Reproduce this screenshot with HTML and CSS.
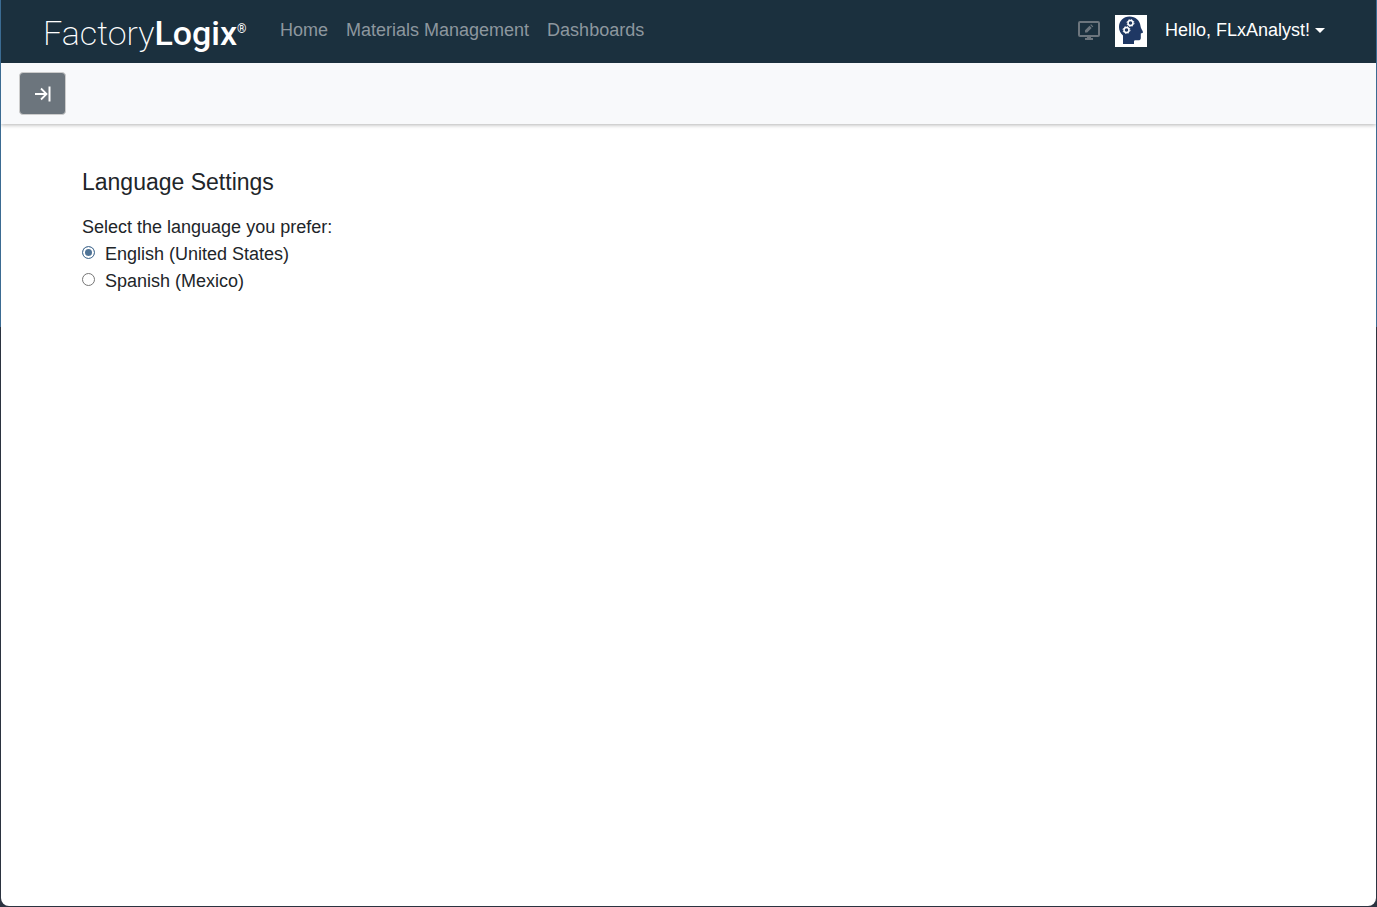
FILE: index.html
```html
<!DOCTYPE html>
<html lang="en">

	<head>
		<meta charset="UTF-8">
		<meta name="viewport" content="width=device-width, initial-scale=1">
		<title>FactoryLogix</title>
		<link rel="stylesheet" href="styles.css">
	</head>

	<body>
		<div class="window">
			<header class="navbar">
				<a class="brand" href="#">Factory<b>Logix</b><sup>®</sup></a>
				<nav class="nav">
					<a href="#">Home</a>
					<a href="#">Materials Management</a>
					<a href="#">Dashboards</a>
				</nav>
				<div class="user">
					<button class="icon-btn" type="button" aria-label="Edit display">
						<svg width="24" height="24" viewBox="0 0 24 24">
							<rect x="2" y="3" width="20" height="14" rx="1" fill="none" stroke="#6c757d" stroke-width="2" />
							<path d="M10 17h4v2h2v2H8v-2h2z" fill="#6c757d" />
							<path d="M8 13.500v-2.200l4.500-4.500 2.200 2.200-4.500 4.500zM13.200 6.100l.9-.9 2.200 2.200-.9.900z" fill="#6c757d" />
						</svg>
					</button>
					<svg class="avatar" width="32" height="32" viewBox="0 0 32 32">
						<rect width="32" height="32" fill="#fff" />
						<path d="M8 29V20.500C5.500 18.500 4 15.500 4 12C4 6 8.500 1.500 14.500 1.500c6 0 10.500 4 11 9.500c0 2 2.500 5 2.500 6.200c0 .9-1.500.9-2.200 1.200v4.600c0 1.800-1 2.300-2.500 2.300h-2.500c-1.300 0-1.800.4-1.800 1.500V29z" fill="#1f3864" />
						<g fill="none" stroke="#fff">
							<circle cx="15.500" cy="8" r="2.500" stroke-width="1.500" />
							<circle cx="15.500" cy="8" r="3.500" stroke-width="1" stroke-dasharray="1.375 1.375" />
							<circle cx="11.500" cy="15" r="2.500" stroke-width="1.500" />
							<circle cx="11.500" cy="15" r="3.500" stroke-width="1" stroke-dasharray="1.375 1.375" />
						</g>
					</svg>
					<button class="user-menu" type="button">Hello, FLxAnalyst!<span class="caret"></span></button>
				</div>
			</header>

			<div class="toolbar">
				<button class="toggle" type="button" aria-label="Expand menu">
					<svg width="18" height="18" viewBox="0 0 18 18" fill="none" stroke="#fff">
						<path d="M1 9h12M7 3.500l5.500 5.500L7 14.500" stroke-width="1.800" />
						<path d="M15.500 1.500v15" stroke-width="2" />
					</svg>
				</button>
			</div>

			<main class="content">
				<h1>Language Settings</h1>
				<fieldset>
					<legend>Select the language you prefer:</legend>
					<div class="option">
						<input type="radio" name="language" id="en" checked>
						<label for="en">English (United States)</label>
					</div>
					<div class="option">
						<input type="radio" name="language" id="es">
						<label for="es">Spanish (Mexico)</label>
					</div>
				</fieldset>
			</main>
		</div>
	</body>

</html>
```
FILE: styles.css
```css
* {
	padding: 0;
	margin: 0;
	box-sizing: border-box;
}

body {
	display: flex;
	min-height: 100vh;
	padding: 0 1px 1px;
	background: linear-gradient(#3b6b92 36%, #2b3340 36%);
	font-family: "Liberation Sans", Arial, sans-serif;
	font-size: 18px;
	line-height: 27px;
	color: #212529;
}

button {
	border: 0;
	background: none;
	font: inherit;
	cursor: pointer;
}

svg {
	display: block;
}

.window {
	flex: 1;
	background: #fff;
	border-radius: 0 0 8px 8px;
}

.navbar {
	display: flex;
	align-items: center;
	height: 63px;
	padding: 0 51px 3px 42px;
	background: #1b303e;
}

.brand {
	width: 200px;
	padding-top: 6px;
	font-family: Roboto, sans-serif;
	font-size: 34px;
	font-weight: 200;
	line-height: 40px;
	white-space: nowrap;
	color: #fff;
	text-decoration: none;
}

.brand b {
	font-weight: 500;
}

.brand sup {
	font-size: 12px;
	font-weight: 400;
	line-height: 0;
	vertical-align: 12px;
}

.nav {
	display: flex;
	gap: 18px;
	margin-left: 37px;
}

.nav a {
	color: #8d979e;
	text-decoration: none;
}

.nav a:hover {
	color: #fff;
}

.user {
	display: flex;
	align-items: center;
	gap: 18px;
	margin-left: auto;
}

.icon-btn {
	margin-right: -4px;
}

.icon-btn,
.avatar {
	margin-top: 2px;
}

.user-menu {
	display: flex;
	align-items: center;
	gap: 5px;
	color: #fff;
}

.caret {
	border-top: 5px solid #fff;
	border-left: 5px solid transparent;
	border-right: 5px solid transparent;
}

.toolbar {
	padding: 9px 18px;
	background: #f8f9fb;
	box-shadow: 0 1px 4px rgba(0, 0, 0, 0.3);
	clip-path: inset(0 0 -8px 0);
}

.toggle {
	display: flex;
	align-items: center;
	justify-content: center;
	width: 47px;
	height: 43px;
	border: 1px solid #ccc;
	border-radius: 4px;
	background: #6c757d;
}

.content {
	padding: 45px 81px;
}

h1 {
	margin-bottom: 18px;
	font-size: 23px;
	font-weight: 400;
	line-height: 27px;
}

fieldset {
	border: 0;
}

.option {
	display: flex;
	align-items: center;
	gap: 10px;
}

.option input {
	appearance: none;
	width: 13px;
	height: 13px;
	margin-bottom: 4px;
	border: 1px solid #767676;
	border-radius: 50%;
	background: #fff;
}

.option input:checked {
	border-color: #4f7396;
	background: #4f7396;
	box-shadow: inset 0 0 0 2px #fff;
}
```
